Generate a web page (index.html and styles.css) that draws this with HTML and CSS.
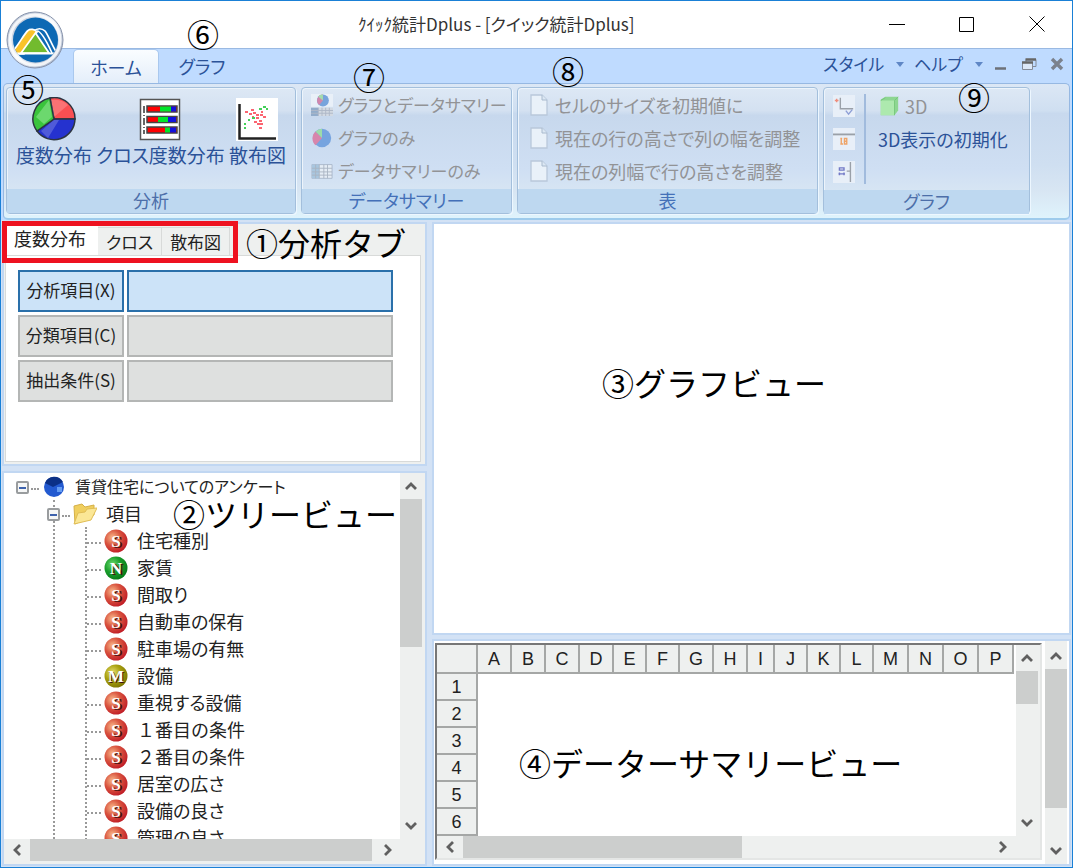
FILE: index.html
```html
<!DOCTYPE html>
<html lang="ja">
<head>
<meta charset="utf-8">
<title>クイック統計Dplus</title>
<link rel="stylesheet" href="styles.css">
</head>
<body>
<svg class="defs" aria-hidden="true">
  <defs>
    <radialGradient id="red" cx="35%" cy="35%" r="70%"><stop offset="0" stop-color="#f9b98a"/><stop offset=".5" stop-color="#d9543f"/><stop offset="1" stop-color="#c01c26"/></radialGradient>
    <radialGradient id="green" cx="35%" cy="35%" r="70%"><stop offset="0" stop-color="#6fdc6f"/><stop offset=".5" stop-color="#1b9e2c"/><stop offset="1" stop-color="#067a18"/></radialGradient>
    <radialGradient id="olive" cx="35%" cy="35%" r="70%"><stop offset="0" stop-color="#e8e070"/><stop offset=".5" stop-color="#a8a010"/><stop offset="1" stop-color="#7d7600"/></radialGradient>
    <linearGradient id="ring" x1="0" y1="0" x2="1" y2="1"><stop offset="0" stop-color="#a9b6cb"/><stop offset=".5" stop-color="#eef2f8"/><stop offset="1" stop-color="#8c9cb8"/></linearGradient>
    <clipPath id="disc"><circle cx="29.500" cy="29" r="22.500"/></clipPath>
    <symbol id="s" viewBox="0 0 24 24"><circle cx="12" cy="12" r="11.5" fill="url(#red)"/><text class="ball-shadow" x="14" y="19" text-anchor="middle">S</text><text class="ball" x="12" y="18" text-anchor="middle">S</text></symbol>
    <symbol id="n" viewBox="0 0 24 24"><circle cx="12" cy="12" r="11.5" fill="url(#green)"/><text class="ball-shadow" x="14" y="19" text-anchor="middle">N</text><text class="ball" x="12" y="18" text-anchor="middle">N</text></symbol>
    <symbol id="m" viewBox="0 0 24 24"><circle cx="12" cy="12" r="11.5" fill="url(#olive)"/><text class="ball-shadow" x="13" y="19" text-anchor="middle">M</text><text class="ball" x="12" y="18" text-anchor="middle">M</text></symbol>
    <symbol id="page" viewBox="0 0 18 22"><path d="M1 1h11l5 5v15H1z" fill="#e9f1f9" stroke="#b9c8da" stroke-width="1.3"/><path d="M12 1v5h5" fill="#dbe7f3" stroke="#a9bace"/></symbol>
    <symbol id="up" viewBox="0 0 12 10"><path d="M1 8L6 3l5 5" fill="none" stroke="#606060" stroke-width="2.8"/></symbol>
    <symbol id="down" viewBox="0 0 12 10"><path d="M1 2l5 5 5-5" fill="none" stroke="#606060" stroke-width="2.8"/></symbol>
    <symbol id="left" viewBox="0 0 10 12"><path d="M8 1L3 6l5 5" fill="none" stroke="#606060" stroke-width="2.8"/></symbol>
    <symbol id="right" viewBox="0 0 10 12"><path d="M2 1l5 5-5 5" fill="none" stroke="#606060" stroke-width="2.8"/></symbol>
  </defs>
</svg>
<div class="window">
  <button class="orb" aria-label="メニュー">
    <svg viewBox="0 0 58 58"><circle cx="29" cy="29" r="28" fill="url(#ring)" stroke="#8793ab"/><circle cx="29" cy="29" r="25" fill="none" stroke="#fff" stroke-opacity=".8" stroke-width="3"/><circle cx="29.500" cy="29" r="22.500" fill="#0d69b4"/><g clip-path="url(#disc)"><path d="M28 20C31 17 36 17 39 20C43 25 46 35 51 42" fill="none" stroke="#fff" stroke-width="1.700"/><path d="M31 20C35 20 41 31 46 42" fill="none" stroke="#fff" stroke-width="1.700"/><path d="M4 43C12 36 17 24 22 19.500C24 17.500 29 18 31 21L18 43z" fill="#f9c32b" stroke="#fff" stroke-width="1.700"/><path d="M15 42L29.500 22L43 42z" fill="#72bb2e" stroke="#fff" stroke-width="1.700"/><path d="M5 42.500h49" stroke="#fff" stroke-width="1.800"/></g></svg>
  </button>
  <header class="titlebar">
    <h1>ｸｲｯｸ統計Dplus - [クイック統計Dplus]</h1>
    <div class="winbuttons">
      <button aria-label="最小化"><svg viewBox="0 0 16 16"><path d="M0 8.500h16"/></svg></button>
      <button aria-label="最大化"><svg viewBox="0 0 16 16"><path d="M.5 1.500h14v14H.5z"/></svg></button>
      <button aria-label="閉じる"><svg viewBox="0 0 16 16"><path d="M.5.5l15 15M15.500.5l-15 15"/></svg></button>
    </div>
  </header>
  <nav class="menubar">
    <button class="tab active">ホーム</button>
    <button class="tab">グラフ</button>
    <div class="menu-right">
      <button class="drop">スタイル<i></i></button>
      <button class="drop">ヘルプ<i></i></button>
      <button class="mdi" aria-label="最小化"><svg viewBox="0 0 16 16"><path d="M2 12.500h11" stroke="#6d7178" stroke-width="2.500"/></svg></button>
      <button class="mdi" aria-label="元に戻す"><svg viewBox="0 0 16 16"><path d="M5 6V3.500h10v7h-3" fill="none" stroke="#848b98"/><path d="M4.500 3.500H15" stroke="#666" stroke-width="2.500"/><path d="M1.500 6.500h10v7h-10z" fill="#dce8f8" stroke="#848b98"/><path d="M1 6.500h11" stroke="#666" stroke-width="2.500"/></svg></button>
      <button class="mdi" aria-label="閉じる"><svg viewBox="0 0 16 16"><path d="M3 3l10 10M13 3L3 13" stroke="#7b818c" stroke-width="3.400"/></svg></button>
    </div>
    <span class="note n6">⑥</span>
  </nav>
  <section class="ribbon">
    <div class="group g1">
      <div class="group-body big">
        <button><svg class="i44" viewBox="0 0 44 44"><g stroke="#2c3440" stroke-width="1.500"><path d="M22 22L18 1A21 21 0 0 1 43 22z" fill="#fa4f52"/><path d="M22 22H43A21 21 0 0 1 5 34z" fill="#2532cf"/><path d="M22 22L5 34A21 21 0 0 1 18 1z" fill="#3ac43c"/></g><path d="M22 20L19 3Q30 2 36 8zM9 34l13-11h5L16 41z" fill="#fff" opacity=".2"/><path d="M4 20L17 3l3 17-8 7z" fill="#cfc" opacity=".35"/></svg>度数分布</button>
        <button><svg class="i44" viewBox="0 0 44 44"><path d="M2.500 2.500h39v40h-39z" fill="#fff" stroke="#555" stroke-width="1.500"/><path d="M6 9v28" stroke="#333" stroke-width="1.500" stroke-dasharray="7 2 1 2"/><path d="M9 9h30v6H9zM9 19.500h30v6H9zM9 30h30v6H9z" fill="red" stroke="#444" stroke-width="1.500"/><path d="M22 9.500h11v5H22zM20 20h10v5H20zM27 30.500h5v5h-5z" fill="#00e52b"/><path d="M33 9.500h5v5h-5zM30 20h8v5h-8zM32 30.500h6v5h-6z" fill="#1111dc"/></svg>クロス度数分布</button>
        <button><svg class="i44" viewBox="0 0 44 44"><path d="M1 1h42v43H1z" fill="#fff"/><path d="M4.500 7v34.500H41" fill="none" stroke="#222" stroke-width="2.500"/><path d="M10 15h3M16 13h3M14 17h3M18 16h3M25 18h3M28 20h3M21 21h3M24 24h3M19 25h3M22 27h4M26 27h2M24 31h3M21 18h3M17 20h2M26 15h2" stroke="#fb6470" stroke-width="2.200"/><path d="M24 12h3M28 10h3M31 12h2M17 21h3M13 23h2M9 27h2M9 31h2" stroke="#43d058" stroke-width="2.200"/></svg>散布図</button>
      </div>
      <h2>分析</h2>
    </div>
    <div class="group g2">
      <div class="group-body list kana">
        <button disabled><svg class="i24" viewBox="0 0 24 24"><path d="M0 0h24v14H0z" fill="#e9f0f8"/><circle cx="13" cy="7" r="6.500" fill="#77a4dc"/><path d="M13 7V.5A6.500 6.500 0 0 0 9 12z" fill="#d287ad"/><path d="M13 7V.5Q9 0 8 3z" fill="#a3dcae"/><path d="M0 15h24v9H0z" fill="#d2d9e2"/><path d="M0 15h8v9H0z" fill="#92acca"/><path d="M0 18h24M0 21h24M8 15v9M12 15v9M16 15v9M20 15v9" stroke="#aeb8c7"/></svg>グラフとデータサマリー</button>
        <button disabled><svg class="i24" viewBox="0 0 24 24"><circle cx="12" cy="12" r="10" fill="#76a4df"/><path d="M12 12L5 20A10 10 0 0 1 5 5z" fill="#d786ac"/><path d="M12 12L5 5Q8 2 12 2z" fill="#9cdca9"/></svg>グラフのみ</button>
        <button disabled><svg class="i24" viewBox="0 0 24 24"><path d="M1 5h22v15H1z" fill="#e5edf5" stroke="#aab8ca"/><path d="M1 5h8v15H1z" fill="#a9c6df"/><path d="M1 9h22M1 13h22M1 16.500h22M5 5v15M9 5v15M14 5v15M18 5v15" stroke="#aab5c3"/></svg>データサマリーのみ</button>
      </div>
      <h2>データサマリー</h2>
      <span class="note n7">⑦</span>
    </div>
    <div class="group g3">
      <div class="group-body list">
        <button disabled><svg class="page"><use href="#page"/></svg>セルのサイズを初期値に</button>
        <button disabled><svg class="page"><use href="#page"/></svg>現在の行の高さで列の幅を調整</button>
        <button disabled><svg class="page"><use href="#page"/></svg>現在の列幅で行の高さを調整</button>
      </div>
      <h2>表</h2>
      <span class="note n8">⑧</span>
    </div>
    <div class="group g4">
      <div class="group-body split">
        <div class="mini">
          <button disabled aria-label="軸"><svg class="i24" viewBox="0 0 24 24"><path d="M0 0h24v24H0z" fill="#e8eff8"/><path d="M8 3v12h14" fill="none" stroke="#9aa0a8" stroke-width="1.500"/><path d="M2 6h4M4 4v4" stroke="#ee8d7c" stroke-width="1.500"/><path d="M14 17l3 4 4-5" fill="none" stroke="#8e9fd6" stroke-width="1.500"/></svg></button>
          <button disabled aria-label="横軸"><svg class="i24" viewBox="0 0 24 24"><path d="M0 0h24v24H0z" fill="#e8eff8"/><path d="M0 7h24" stroke="#9aa0a8" stroke-width="2"/><path d="M8 11.500h2M9 11v7M8 17.500h3" stroke="#eea468" stroke-width="1.500"/><path d="M12.500 11.500h2.500v6h-2.500zM12 14.500h3" fill="none" stroke="#eea468" stroke-width="1.500"/></svg></button>
          <button disabled aria-label="縦軸"><svg class="i24" viewBox="0 0 24 24"><path d="M0 0h24v24H0z" fill="#e8eff8"/><path d="M19 1v22M15 11h4" stroke="#9aa0a8" stroke-width="1.500"/><path d="M7 7.500h5v2.500H7zM6 14h7M7 12.500v3M12 12.500v3" fill="none" stroke="#7279c6" stroke-width="1.500"/></svg></button>
        </div>
        <div class="three">
          <button disabled><svg class="i24" viewBox="0 0 24 24"><path d="M3 5l5-3h14v15l-4 5H3z" fill="#8ed692"/><path d="M3 6h15v16H3z" fill="#ade9ae"/><path d="M3 6l5-3M18 6l4-4M18 6v16" stroke="#75c77b"/></svg>3D</button>
          <button>3D表示の初期化</button>
        </div>
      </div>
      <h2>グラフ</h2>
      <span class="note n9">⑨</span>
    </div>
    <span class="note n5">⑤</span>
  </section>
  <main class="workspace">
    <div class="left">
      <section class="pane analysis">
        <div class="tabs">
          <button class="on">度数分布</button><button>クロス</button><button>散布図</button>
          <div class="marker"></div>
          <span class="note n1">①分析タブ</span>
        </div>
        <form class="fields">
          <label for="fx" class="sel">分析項目(X)</label><input id="fx" class="sel">
          <label for="fc">分類項目(C)</label><input id="fc">
          <label for="fs">抽出条件(S)</label><input id="fs">
        </form>
      </section>
      <section class="pane treepane">
        <div class="tree-row">
          <div class="tree">
            <div class="row"><button class="toggle" aria-label="折りたたむ"></button><i class="dots"></i><svg class="ball-icon root" viewBox="0 0 24 24"><circle cx="12" cy="12" r="10" fill="#235ad0"/><path d="M3 8a10 10 0 0 1 18-1L11 12z" fill="#0b3086"/><path d="M15 12h5v5h-5z" fill="#649cf2"/></svg><span class="small">賃貸住宅についてのアンケート</span></div>
            <ul class="lv2"><li>
              <div class="row"><button class="toggle" aria-label="折りたたむ"></button><i class="dots"></i><svg class="ball-icon" viewBox="0 0 24 24"><path d="M1 4l8-2 3 3 9-2v10L2 22z" fill="#f0cf5f" stroke="#d5b047"/><path d="M1 22L5 11l7-1 2-3 10-1-6 12z" fill="#fbe796" stroke="#e0bd55"/></svg><span>項目</span></div>
              <ul class="lv3">
                <li class="row"><i class="dots"></i><svg class="ball-icon"><use href="#s"/></svg><span>住宅種別</span></li>
                <li class="row"><i class="dots"></i><svg class="ball-icon"><use href="#n"/></svg><span>家賃</span></li>
                <li class="row"><i class="dots"></i><svg class="ball-icon"><use href="#s"/></svg><span>間取り</span></li>
                <li class="row"><i class="dots"></i><svg class="ball-icon"><use href="#s"/></svg><span>自動車の保有</span></li>
                <li class="row"><i class="dots"></i><svg class="ball-icon"><use href="#s"/></svg><span>駐車場の有無</span></li>
                <li class="row"><i class="dots"></i><svg class="ball-icon"><use href="#m"/></svg><span>設備</span></li>
                <li class="row"><i class="dots"></i><svg class="ball-icon"><use href="#s"/></svg><span>重視する設備</span></li>
                <li class="row"><i class="dots"></i><svg class="ball-icon"><use href="#s"/></svg><span class="full">１番目の条件</span></li>
                <li class="row"><i class="dots"></i><svg class="ball-icon"><use href="#s"/></svg><span class="full">２番目の条件</span></li>
                <li class="row"><i class="dots"></i><svg class="ball-icon"><use href="#s"/></svg><span>居室の広さ</span></li>
                <li class="row"><i class="dots"></i><svg class="ball-icon"><use href="#s"/></svg><span>設備の良さ</span></li>
                <li class="row"><i class="dots"></i><svg class="ball-icon"><use href="#s"/></svg><span>管理の良さ</span></li>
              </ul>
            </li></ul>
          </div>
          <div class="vbar"><button aria-label="上へ"><svg><use href="#up"/></svg></button><div class="track"><div class="thumb t-tree"></div></div><button aria-label="下へ"><svg><use href="#down"/></svg></button></div>
        </div>
        <div class="hbar"><button aria-label="左へ"><svg><use href="#left"/></svg></button><div class="track"><div class="thumb t-full"></div></div><button aria-label="右へ"><svg><use href="#right"/></svg></button></div>
        <span class="note n2">②ツリービュー</span>
      </section>
    </div>
    <div class="right">
      <section class="pane graph"><span class="note n3">③グラフビュー</span></section>
      <section class="pane summary">
        <div class="sheet">
          <div class="sheet-row">
            <div class="cells">
              <table>
                <colgroup><col class="head"><col class="c34" span="4"><col class="c33" span="2"><col class="c34" span="2"><col class="c27"><col class="c33" span="3"><col class="c35" span="4"></colgroup>
                <thead><tr><td></td><th>A</th><th>B</th><th>C</th><th>D</th><th>E</th><th>F</th><th>G</th><th>H</th><th>I</th><th>J</th><th>K</th><th>L</th><th>M</th><th>N</th><th>O</th><th>P</th></tr></thead>
                <tbody>
                  <tr><th>1</th><td colspan="16"></td></tr>
                  <tr><th>2</th><td colspan="16"></td></tr>
                  <tr><th>3</th><td colspan="16"></td></tr>
                  <tr><th>4</th><td colspan="16"></td></tr>
                  <tr><th>5</th><td colspan="16"></td></tr>
                  <tr><th>6</th><td colspan="16"></td></tr>
                </tbody>
              </table>
            </div>
            <div class="vbar"><button aria-label="上へ"><svg><use href="#up"/></svg></button><div class="track"><div class="thumb t-sheet"></div></div><button aria-label="下へ"><svg><use href="#down"/></svg></button></div>
          </div>
          <div class="hbar"><button aria-label="左へ"><svg><use href="#left"/></svg></button><div class="track"><div class="thumb t-half"></div></div><button aria-label="右へ"><svg><use href="#right"/></svg></button></div>
        </div>
        <div class="vbar outer"><button aria-label="上へ"><svg><use href="#up"/></svg></button><div class="track"><div class="thumb t-outer"></div></div><button aria-label="下へ"><svg><use href="#down"/></svg></button></div>
        <span class="note n4">④データーサマリービュー</span>
      </section>
    </div>
  </main>
</div>
</body>
</html>
```
FILE: styles.css
```css
* { box-sizing: border-box; }
body {
  margin: 0;
  font-family: "Noto Sans CJK JP", sans-serif;
  font-size: 18px;
  line-height: 24px;
  color: #222;
  font-feature-settings: "palt";
}
button { margin: 0; padding: 0; border: 0; background: none; font: inherit; font-feature-settings: inherit; color: inherit; white-space: nowrap; }
ul { list-style: none; margin: 0; padding: 0; }
h1, h2 { margin: 0; font-size: 18px; font-weight: 400; }
svg { display: block; flex: none; }
.defs { position: absolute; width: 0; height: 0; }
.window {
  position: relative;
  display: flex;
  flex-direction: column;
  height: 100vh;
  border: 1px solid #1a80d6;
  background: #bfdbff;
  overflow: hidden;
}
.note { position: absolute; z-index: 5; font-size: 32px; line-height: 32px; color: #000; white-space: nowrap; font-feature-settings: normal; pointer-events: none; }

.titlebar { position: relative; display: flex; align-items: center; height: 48px; padding-bottom: 2px; flex: none; background: #fff; border-bottom: 1px solid #9ab9e2; }
.titlebar h1 { flex: 1; padding-left: 357px; color: #333; font-size: 17px; white-space: nowrap; }
.winbuttons { display: flex; gap: 54px; padding-right: 27px; }
.winbuttons svg { width: 16px; height: 16px; fill: none; stroke: #000; }
.orb { position: absolute; z-index: 4; left: 5px; top: 10px; width: 58px; height: 58px; }

.menubar { position: relative; display: flex; flex: none; align-items: flex-end; height: 34px; padding-left: 72px; color: #2b5298; }
.tab { height: 34px; width: 86px; line-height: 32px; text-align: center; }
.tab.active { background: linear-gradient(#fafdff, #e4eefa); border: 1px solid #a9c8ee; border-bottom: 0; border-radius: 5px 5px 0 0; }
.menu-right { display: flex; align-items: center; margin-left: auto; height: 34px; padding: 0 7px 4px 0; font-size: 17px; }
.drop { display: flex; align-items: center; gap: 12px; margin-right: 10px; }
.drop i { border: 4px solid transparent; border-top: 5px solid #5f87c6; border-bottom: 0; }
.mdi { margin-left: 12px; }
.drop + .mdi { margin-left: 0; }
.mdi svg { width: 16px; height: 16px; }

.ribbon {
  position: relative;
  display: flex;
  flex: none;
  gap: 5px;
  margin: 0 2px;
  padding: 3px 3px 4px 2px;
  border: 1px solid #96b8e2;
  border-bottom: 2px solid #9ecbec;
  border-radius: 5px;
  background: linear-gradient(#dce7f5, #cfdff1 20%, #c8d9ee 22%, #cfdff1 60%, #d8e6f3 80%, #dff3fc);
}
.group {
  position: relative;
  display: flex;
  flex-direction: column;
  border: 1px solid #a3bfdc;
  border-radius: 4px;
  background: linear-gradient(#dde8f5, #d4e1f1 18%, #c7d8ed 22%, #cfdff3 65%, #d8e6f3 85%);
  box-shadow: inset 1px 1px 0 #edf4fb, 1px 1px 0 #edf7ff;
  height: 127px;
}
.g1 { width: 290px; }
.g2 { width: 211px; }
.g3 { width: 301px; }
.g4 { width: 207px; }
.group h2 { height: 24px; line-height: 22px; flex: none; text-align: center; color: #4470b8; background: #bed8f0; }
.g1 h2, .g4 h2 { color: #4d6fa9; }
.group-body { flex: 1; display: flex; color: #2b5298; }
.big { justify-content: space-between; padding: 9px 9px 0; font-size: 19px; align-items: flex-start; }
.big button { display: flex; flex-direction: column; align-items: center; gap: 2px; }
.i44 { width: 44px; height: 44px; }
.i24 { width: 22px; height: 24px; }
.list { flex-direction: column; padding: 0 9px 2px; }
.list button { display: flex; align-items: center; gap: 7px; height: 33px; color: #929396; }
.list.kana { font-size: 17px; }
.kana button { gap: 5px; }
.page { width: 18px; height: 22px; margin-left: 3px; }
.split { padding: 6px 10px 6px 9px; }
.mini { display: flex; flex-direction: column; gap: 9px; padding-right: 9px; border-right: 2px solid #a1bbdd; margin-right: 12px; }
.three { display: flex; flex-direction: column; gap: 9px; align-items: flex-start; }
.three button { display: flex; align-items: center; gap: 5px; height: 24px; }
.three button:disabled { color: #929396; }

.workspace { flex: 1; min-height: 0; display: flex; gap: 5px; padding: 2px 1px 1px; background: #d3e2f5; }
.left { width: 425px; flex: none; display: flex; flex-direction: column; gap: 5px; }
.right { flex: 1; min-width: 0; display: flex; flex-direction: column; gap: 4px; }
.pane { position: relative; border: 2px solid #c1d7f2; background: #fff; }
.analysis { height: 244px; flex: none; display: flex; flex-direction: column; background: #eef0ef; padding: 0 4px 2px 1px; }
.tabs { position: relative; display: flex; align-items: flex-end; height: 31px; flex: none; }
.tabs button { height: 28px; padding: 0 9px; border: 1px solid #d8dad9; border-bottom: 0; background: #eef0ef; font-size: 17px; }
.tabs button + button { border-left-width: 0; padding: 0 8px; }
.tabs .on { height: 31px; background: #fff; border: 0; padding: 0 12px 3px 9px; font-size: 18px; }
.marker { position: absolute; z-index: 3; left: -3px; top: -3px; width: 236px; height: 42px; border: 5px solid #ee1220; pointer-events: none; }
.fields { flex: 1; display: grid; grid-template-columns: 106px 1fr; grid-auto-rows: 42px; gap: 3px; padding: 14px 27px 0 12px; background: #fff; border: 1px solid #d8dad9; }
.fields label, .fields input { border: 2px solid #b4b6b5; background: #dee0df; min-width: 0; border-radius: 0; font: inherit; }
.fields label { display: flex; align-items: center; justify-content: center; white-space: nowrap; font-size: 17px; padding-bottom: 2px; }
.fields .sel { border-color: #2a70aa; background: #cce3f8; }

.treepane { flex: 1; min-height: 0; display: flex; flex-direction: column; padding-bottom: 3px; background: #eef0ef; }
.tree-row { flex: 1; min-height: 0; display: flex; padding-right: 3px; }
.tree { flex: 1; overflow: hidden; padding: 0 0 0 12px; background: #fff; }
.row { display: flex; align-items: center; height: 27px; white-space: nowrap; }
.row span { padding-bottom: 2px; }
.toggle { width: 13px; height: 13px; margin-top: 2px; flex: none; border: 2px solid #999c9e; border-radius: 2px; background: linear-gradient(#3d62ad, #3d62ad) center / 7px 2px no-repeat #f5f6f6; }
.dots { width: 15px; flex: none; border-top: 2px dotted #999; margin: 4px 3px 0 2px; }
.toggle + .dots { width: 8px; }
.ball-icon { width: 24px; height: 24px; margin-right: 9px; }
.ball { font: bold 17px "Liberation Serif", serif; fill: #fff; }
.ball-shadow { font: bold 17px "Liberation Serif", serif; fill: #401010; }
.small { font-size: 16px; }
.full { font-feature-settings: normal; }
.lv2 { margin-left: 37px; border-left: 2px dotted #999; }
.lv2 > li > .row { margin-left: -8px; }
.lv3 { margin-left: 30px; border-left: 2px dotted #999; }
.lv3 .dots { margin-left: 0; width: 14px; }

.vbar, .hbar { display: flex; flex: none; background: #eef0ef; }
.vbar { flex-direction: column; width: 22px; }
.hbar { height: 22px; margin-right: 24px; }
.vbar button, .hbar button { display: flex; align-items: center; justify-content: center; width: 26px; height: 22px; flex: none; }
.vbar button { width: 22px; height: 26px; }
.vbar button svg { width: 12px; height: 10px; }
.hbar button svg { width: 10px; height: 12px; }
.track { flex: 1; min-width: 0; min-height: 0; }
.thumb { background: #cccecd; }
.vbar .thumb { width: 22px; }
.hbar .thumb { height: 22px; }
.t-tree { height: 47%; }
.t-full { width: 99%; }
.t-sheet { height: 24%; }
.t-half { width: 53%; }
.t-outer { height: 82%; }

.graph { flex: 1; min-height: 0; }
.summary { height: 227px; flex: none; display: flex; }
.sheet { flex: 1; min-width: 0; display: flex; flex-direction: column; margin: 2px 3px 4px 1px; border: 2px solid #777; border-right-color: #e4e6e5; border-bottom-color: #e4e6e5; background: #eef0ef; }
.sheet-row { flex: 1; min-height: 0; display: flex; }
.sheet .vbar { margin-right: 2px; }
.cells { flex: 1; min-width: 0; overflow: hidden; background: #fff; }
table { table-layout: fixed; width: 576px; border-collapse: collapse; }
td, th { height: 27px; padding: 0; }
th, thead td { background: #eef0ef; border: 2px solid #a5a7a6; border-width: 0 2px 2px 0; font-family: "Liberation Sans", sans-serif; font-weight: 400; }
thead th, thead td { height: 28px; }
.head { width: 40px; }
.c34 { width: 34px; }
.c33 { width: 33px; }
.c35 { width: 35px; }
.c27 { width: 27px; }
.outer { margin-right: 2px; padding-top: 2px; }

.n1 { left: 241px; top: 2px; }
.n2 { left: 169px; top: 24px; }
.n3 { left: 168px; top: 142px; }
.n4 { left: 85px; top: 105px; }
.n5 { left: 8px; top: -12px; }
.n6 { left: 186px; top: -32px; }
.n7 { left: 51px; top: -28px; }
.n8 { left: 34px; top: -34px; }
.n9 { left: 134px; top: -8px; }
```
